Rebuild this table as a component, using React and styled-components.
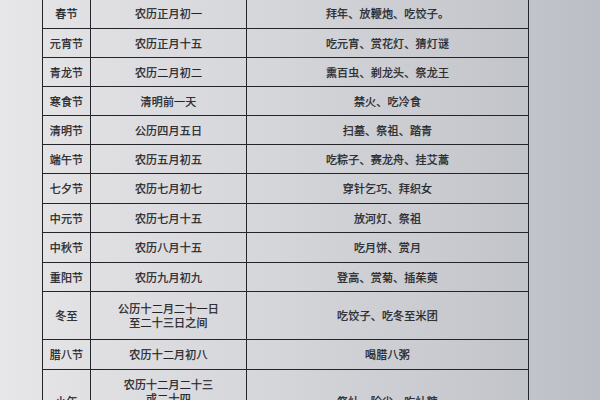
import React from 'react';
import styled, { createGlobalStyle } from 'styled-components';

const GlobalStyle = createGlobalStyle`
  html, body {
    margin: 0;
    padding: 0;
    width: 600px;
    height: 400px;
    overflow: hidden;
  }
  body {
    background: linear-gradient(90deg, #e7e7e9 0%, #e0e0e3 15%, #d5d6da 45%, #c8cacf 75%, #bbbec5 100%);
    font-family: "Noto Sans CJK SC", "Noto Sans", sans-serif;
  }
`;

const Page = styled.div`
  padding-left: 42px;
  margin-top: -3px;
`;

const Table = styled.div`
  display: grid;
  grid-template-columns: 48px 156px 282px;
  width: max-content;
  border-left: 1.5px solid #23252a;
  border-top: 1.5px solid #23252a;
`;

const Cell = styled.div`
  box-sizing: border-box;
  height: ${p => p.$h}px;
  border-right: 1.5px solid #23252a;
  border-bottom: 1.5px solid #23252a;
  display: flex;
  justify-content: center;
  align-items: ${p => (p.$top ? 'flex-start' : 'center')};
  padding-top: ${p => (p.$top ? p.$top : 0)}px;
  text-align: center;
  font-size: 11px;
  line-height: 14px;
  letter-spacing: 0.2px;
  color: #232428;
  -webkit-text-stroke: 0.25px #232428;
  white-space: pre-line;
`;

const festivals = [
  { name: '春节', date: '农历正月初一', custom: '拜年、放鞭炮、吃饺子。', h: 30.5 },
  { name: '元宵节', date: '农历正月十五', custom: '吃元宵、赏花灯、猜灯谜', h: 29 },
  { name: '青龙节', date: '农历二月初二', custom: '熏百虫、剃龙头、祭龙王', h: 29 },
  { name: '寒食节', date: '清明前一天', custom: '禁火、吃冷食', h: 29 },
  { name: '清明节', date: '公历四月五日', custom: '扫墓、祭祖、踏青', h: 29 },
  { name: '端午节', date: '农历五月初五', custom: '吃粽子、赛龙舟、挂艾蒿', h: 29.5 },
  { name: '七夕节', date: '农历七月初七', custom: '穿针乞巧、拜织女', h: 29.5 },
  { name: '中元节', date: '农历七月十五', custom: '放河灯、祭祖', h: 29.5 },
  { name: '中秋节', date: '农历八月十五', custom: '吃月饼、赏月', h: 29.5 },
  { name: '重阳节', date: '农历九月初九', custom: '登高、赏菊、插茱萸', h: 29 },
  { name: '冬至', date: '公历十二月二十一日\n至二十三日之间', custom: '吃饺子、吃冬至米团', h: 48 },
  { name: '腊八节', date: '农历十二月初八', custom: '喝腊八粥', h: 30 },
  { name: '小年', date: '农历十二月二十三\n或二十四', custom: '祭灶、除尘、吃灶糖', h: 64, top: 7 },
];

const App = () => {
  return (
    <>
      <GlobalStyle />
      <Page>
        <Table>
          {festivals.map(f => (
            <React.Fragment key={f.name}>
              <Cell $h={f.h}>{f.name}</Cell>
              <Cell $h={f.h} $top={f.top}>{f.date}</Cell>
              <Cell $h={f.h}>{f.custom}</Cell>
            </React.Fragment>
          ))}
        </Table>
      </Page>
    </>
  );
};

export default App;
